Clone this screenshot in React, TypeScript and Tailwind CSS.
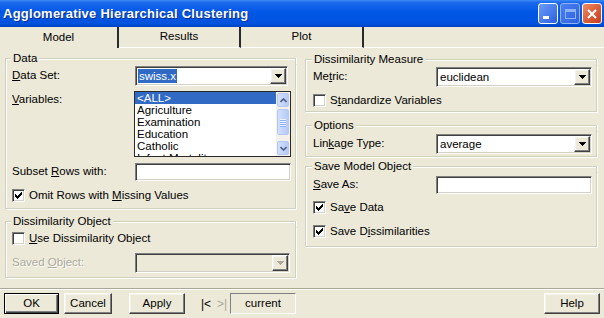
import React from "react";

const sunken =
  "border border-t-[#808080] border-l-[#808080] border-b-white border-r-white shadow-[inset_1px_1px_0_#404040,inset_-1px_-1px_0_#D4D0C8]";
const raised =
  "border border-t-white border-l-white border-b-[#404040] border-r-[#404040] shadow-[inset_-1px_-1px_0_#808080,inset_1px_1px_0_#F4F3EE]";

function U({ c }: { c: string }) {
  return <span className="underline underline-offset-[1px]">{c}</span>;
}

function Tri({ gray }: { gray?: boolean }) {
  return (
    <svg width="7" height="4" viewBox="0 0 7 4" shapeRendering="crispEdges">
      <path d="M0 0H7V1H6V2H5V3H4V4H3V3H2V2H1V1H0Z" fill={gray ? "#ACA899" : "#000"} />
    </svg>
  );
}

function Combo({ value, className, sel, disabled }: { value?: string; className: string; sel?: boolean; disabled?: boolean }) {
  return (
    <div className={`flex h-[20px] p-[1px] ${sunken} ${disabled ? "bg-[#ECE9D8]" : "bg-white"} ${className}`}>
      <div className="flex-1 flex items-center pl-[1px] overflow-hidden">
        {value && (
          <span className={sel ? "bg-[#316AC5] text-white px-[1px] leading-[14px]" : "px-[1px] leading-[14px]"}>{value}</span>
        )}
      </div>
      <div className={`w-[16px] h-[16px] bg-[#ECE9D8] flex items-center justify-center ${raised}`}>
        <Tri gray={disabled} />
      </div>
    </div>
  );
}

function Input({ className }: { className: string }) {
  return <div className={`h-[18px] bg-white ${sunken} ${className}`} />;
}

function Check({ checked }: { checked?: boolean }) {
  return (
    <div className={`w-[13px] h-[13px] shrink-0 bg-white flex items-center justify-center ${sunken}`}>
      {checked && (
        <svg width="7" height="7" viewBox="0 0 7 7" shapeRendering="crispEdges">
          <path d="M6 0H7V3H6V4H5V5H4V6H3V7H2V6H1V5H0V2H1V3H2V4H3V3H4V2H5V1H6Z" fill="#000" />
        </svg>
      )}
    </div>
  );
}

function Group({ title, corner, body, children, className }: { title: string; corner: string; body: string; children: React.ReactNode; className?: string }) {
  return (
    <div className={`flex flex-col ${className ?? ""}`}>
      <div className="flex h-[12px]">
        <div className={`mt-[6px] border-t border-l border-[#D0D0BF] shadow-[inset_1px_1px_0_white] ${corner}`} />
        <span className="px-[2px] leading-[12px]">{title}</span>
        <div className="flex-1 mt-[6px] border-t border-r border-[#D0D0BF] shadow-[inset_0_1px_0_white,1px_0_0_white]" />
      </div>
      <div className={`flex flex-col border-x border-b border-[#D0D0BF] shadow-[inset_1px_0_0_white,1px_1px_0_white] ${body}`}>{children}</div>
    </div>
  );
}

function SBtn({ up }: { up?: boolean }) {
  return (
    <div className="h-[14px] rounded-[2px] border border-[#B4C8F6] bg-[linear-gradient(to_right,#D2E0FD,#B6CAF7)] flex items-center justify-center">
      <svg width="7" height="5" viewBox="0 0 7 5">
        <polyline points={up ? "0.5,4 3.5,1 6.5,4" : "0.5,1 3.5,4 6.5,1"} fill="none" stroke="#4D6185" strokeWidth="1.6" />
      </svg>
    </div>
  );
}

function ListBox() {
  const items = ["Agriculture", "Examination", "Education", "Catholic", "Infant Mortality"];
  return (
    <div className="w-[157px] h-[66px] border border-[#2A2A2A] bg-white flex overflow-hidden">
      <div className="flex-1 flex flex-col leading-[12px] overflow-hidden">
        <div className="h-[12px] shrink-0 bg-[#316AC5] text-white pl-[2px]">&lt;ALL&gt;</div>
        {items.map((t) => (
          <div key={t} className="h-[12px] shrink-0 pl-[2px] whitespace-nowrap">
            {t}
          </div>
        ))}
      </div>
      <div className="w-[14px] bg-[#F3F1EA] flex flex-col p-[1px]">
        <SBtn up />
        <div className="mt-[2px] h-[26px] rounded-[2px] border border-[#B4C8F6] bg-[linear-gradient(to_right,#D2E0FD,#B6CAF7)] flex flex-col items-center justify-center gap-[1px]">
          <div className="w-[6px] h-[1px] bg-[#EEF4FE] shadow-[0_1px_0_#8CB0F8]" />
          <div className="w-[6px] h-[1px] bg-[#EEF4FE] shadow-[0_1px_0_#8CB0F8]" />
          <div className="w-[6px] h-[1px] bg-[#EEF4FE] shadow-[0_1px_0_#8CB0F8]" />
          <div className="w-[6px] h-[1px] bg-[#EEF4FE] shadow-[0_1px_0_#8CB0F8]" />
        </div>
        <div className="mt-auto">
          <SBtn />
        </div>
      </div>
    </div>
  );
}

export default function App() {
  return (
    <div className="w-[604px] h-[318px] flex flex-col bg-[#ECE9D8] overflow-hidden text-[11.5px] text-black font-['Liberation_Sans',Arial,sans-serif]">
      {/* Title bar */}
      <div className="h-[27px] shrink-0 flex items-center bg-[linear-gradient(to_bottom,#3D8BF7_0%,#1A67EC_10%,#0058E6_45%,#0053DF_85%,#0044C4_100%)]">
        <span className="pl-[3px] text-white font-bold text-[13px] tracking-[0.25px] [text-shadow:1px_1px_0_#0B2C8C]">
          Agglomerative Hierarchical Clustering
        </span>
        <div className="ml-auto flex gap-[2px] pr-[2px]">
          <div className="w-[20px] h-[21px] rounded-[3px] border border-white bg-[linear-gradient(to_bottom_right,#6E9CF8,#2A5FE0)] flex items-end p-[4px]">
            <div className="w-[6px] h-[3px] bg-white" />
          </div>
          <div className="w-[20px] h-[21px] rounded-[3px] border border-[#8FB2F5] bg-[linear-gradient(to_bottom_right,#4A80F0,#2D62DE)] flex items-center justify-center">
            <div className="w-[11px] h-[10px] border border-[#8FB2F5] border-t-[3px]" />
          </div>
          <div className="w-[20px] h-[21px] rounded-[3px] border border-white bg-[linear-gradient(to_bottom_right,#EE8A62,#C7391A)] flex items-center justify-center">
            <svg width="10" height="10" viewBox="0 0 10 10">
              <path d="M1 1L9 9M9 1L1 9" stroke="white" strokeWidth="2" />
            </svg>
          </div>
        </div>
      </div>

      {/* Tabs */}
      <div className="h-[21px] shrink-0 flex">
        <div className="w-[119px] flex items-center justify-center border-r-2 border-r-[#2B2B2B]">Model</div>
        <div className="w-[122px] flex items-center justify-center border-r-2 border-r-[#2B2B2B] border-b border-b-white">Results</div>
        <div className="w-[123px] flex items-center justify-center border-r-2 border-r-[#2B2B2B] border-b border-b-white">Plot</div>
        <div className="flex-1 border-b border-b-white" />
      </div>

      {/* Body */}
      <div className="flex-1 flex pt-[4px]">
        <div className="ml-[5px] w-[291px] flex flex-col">
          <Group title="Data" corner="w-[6px]" body="pl-[6px] pb-[6px]">
            <div className="mt-[2px] flex items-center h-[20px]">
              <span className="w-[123px]">
                <U c="D" />ata Set:
              </span>
              <Combo className="w-[153px]" value="swiss.x" sel />
            </div>
            <div className="mt-[5px] flex items-start">
              <span className="w-[122px] pt-[2px] leading-[12px]">
                <U c="V" />ariables:
              </span>
              <ListBox />
            </div>
            <div className="mt-[6px] flex items-center h-[18px]">
              <span className="w-[123px]">
                Subset <U c="R" />ows with:
              </span>
              <Input className="w-[156px]" />
            </div>
            <div className="mt-[8px] flex items-center gap-[4px] h-[13px]">
              <Check checked />
              <span>
                Omit Rows with <U c="M" />issing Values
              </span>
            </div>
          </Group>
          <Group title="Dissimilarity Object" corner="w-[6px]" body="pl-[6px] pb-[4px]" className="mt-[6px]">
            <div className="mt-[5px] flex items-center gap-[4px] h-[13px]">
              <Check />
              <span>
                <U c="U" />se Dissimilarity Object
              </span>
            </div>
            <div className="mt-[8px] flex items-center h-[20px]">
              <span className="w-[123px] text-[#ACA899] [text-shadow:1px_1px_0_white]">
                Saved <U c="O" />bject:
              </span>
              <Combo className="w-[155px]" disabled />
            </div>
          </Group>
        </div>

        <div className="ml-[9px] w-[292px] pt-[1px] flex flex-col">
          <Group title="Dissimilarity Measure" corner="w-[7px]" body="pl-[7px] pb-[4px]">
            <div className="mt-[2px] flex items-center h-[20px]">
              <span className="w-[123px]">
                Me<U c="t" />ric:
              </span>
              <Combo className="w-[156px]" value="euclidean" />
            </div>
            <div className="mt-[7px] flex items-center gap-[4px] h-[13px]">
              <Check />
              <span>
                S<U c="t" />andardize Variables
              </span>
            </div>
          </Group>
          <Group title="Options" corner="w-[7px]" body="pl-[7px] pb-[2px]" className="mt-[7px]">
            <div className="mt-[3px] flex items-center h-[20px]">
              <span className="w-[123px]">
                Lin<U c="k" />age Type:
              </span>
              <Combo className="w-[156px]" value="average" />
            </div>
          </Group>
          <Group title="Save Model Object" corner="w-[7px]" body="pl-[7px] pb-[8px]" className="mt-[3px]">
            <div className="mt-[4px] flex items-center h-[18px]">
              <span className="w-[123px]">
                <U c="S" />ave As:
              </span>
              <Input className="w-[156px]" />
            </div>
            <div className="mt-[7px] flex items-center gap-[4px] h-[13px]">
              <Check checked />
              <span>
                Sa<U c="v" />e Data
              </span>
            </div>
            <div className="mt-[11px] flex items-center gap-[4px] h-[13px]">
              <Check checked />
              <span>
                Save D<U c="i" />ssimilarities
              </span>
            </div>
          </Group>
        </div>
      </div>

      {/* Separator */}
      <div className="h-[2px] shrink-0 border-t border-t-[#ACA899] border-b border-b-white" />

      {/* Footer */}
      <div className="h-[28px] shrink-0 flex items-start pt-[3px]">
        <div className="ml-[4px] w-[55px] h-[21px] flex items-center justify-center border border-black shadow-[inset_1px_1px_0_white,inset_-1px_-1px_0_#404040,inset_-2px_-2px_0_#808080]">
          OK
        </div>
        <div className={`ml-[5px] w-[48px] h-[21px] flex items-center justify-center ${raised}`}>Cancel</div>
        <div className={`ml-[17px] w-[56px] h-[21px] flex items-center justify-center ${raised}`}>Apply</div>
        <div className="ml-[13px] w-[32px] h-[21px] flex items-center justify-around text-[12px]">
          <span>|&lt;</span>
          <span className="text-[#ACA899]">&gt;|</span>
        </div>
        <div className="w-[66px] h-[21px] flex items-center justify-center border border-t-[#808080] border-l-[#808080] border-b-white border-r-white">
          current
        </div>
        <div className={`ml-auto mr-[4px] w-[56px] h-[21px] flex items-center justify-center ${raised}`}>Help</div>
      </div>
    </div>
  );
}
